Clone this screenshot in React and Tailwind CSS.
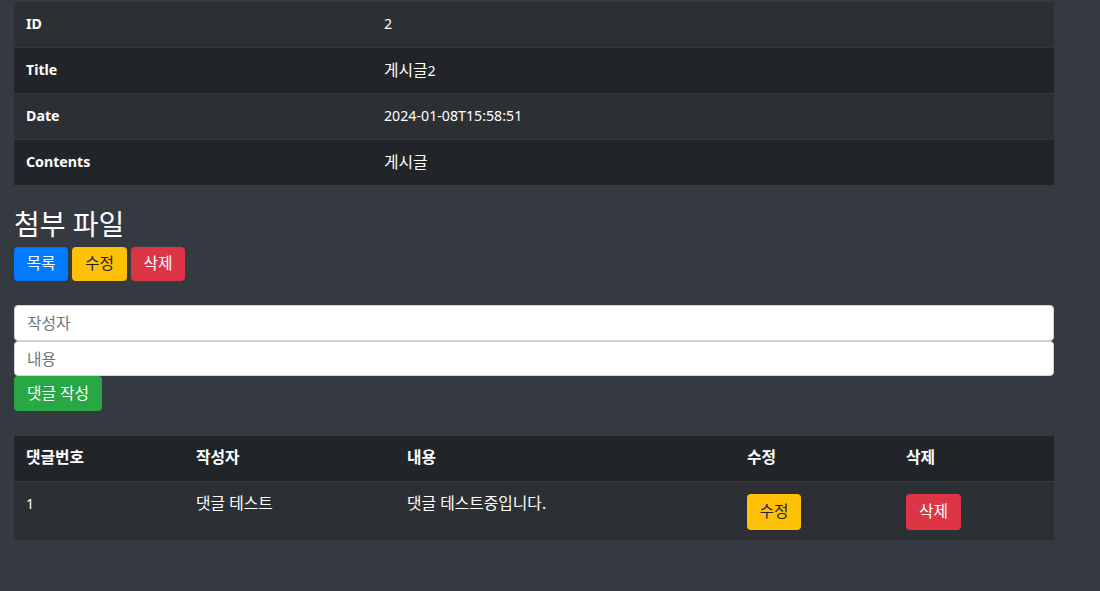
import React from "react";

const font = { fontFamily: '"Noto Sans", "Noto Sans CJK KR", sans-serif' };

function K({ children }) {
  return <span className="text-[15.8px]">{children}</span>;
}

function InfoRow({ label, value, striped, first }) {
  return (
    <tr className={`${striped ? "bg-[#2c3034]" : "bg-[#212529]"} ${first ? "" : "border-t border-[#32383e]"}`}>
      <th className={`w-[358px] ${first ? "h-[45px]" : "h-[46px]"} pl-[12px] text-left font-bold align-middle leading-[24px]`}>{label}</th>
      <td className="pl-[12px] align-middle leading-[24px]">{value}</td>
    </tr>
  );
}

export default function App() {
  return (
    <div className="min-h-screen bg-[#343a40] text-white text-[14.2px]" style={font}>
      <div className="px-[14px] pt-[2px] w-[1068px]">
        <table className="w-[1040px] border-collapse">
          <tbody>
            <InfoRow label="ID" value="2" striped first />
            <InfoRow label="Title" value={<><K>게시글</K>2</>} />
            <InfoRow label="Date" value="2024-01-08T15:58:51" striped />
            <InfoRow label="Contents" value={<K>게시글</K>} />
          </tbody>
        </table>

        <h3 className="mt-[22px] mb-[6px] text-[28px] leading-[34px] font-normal">첨부 파일</h3>
        <div className="flex gap-[4px]">
          <button className="h-[34px] w-[54px] rounded-[4px] bg-[#007bff] text-white text-[15.8px]">목록</button>
          <button className="h-[34px] w-[55px] rounded-[4px] bg-[#ffc107] text-[#212529] text-[15.8px]">수정</button>
          <button className="h-[34px] w-[54px] rounded-[4px] bg-[#dc3545] text-white text-[15.8px]">삭제</button>
        </div>

        <div className="mt-[24px] w-[1040px] flex flex-col">
          <input
            className="h-[36px] w-full rounded-[4px] border border-[#ced4da] bg-white px-[12px] text-[15.8px] text-[#495057] placeholder:text-[#6c757d] outline-none"
            placeholder="작성자"
          />
          <input
            className="h-[35px] w-full rounded-[4px] border border-[#ced4da] bg-white px-[12px] text-[15.8px] text-[#495057] placeholder:text-[#6c757d] outline-none"
            placeholder="내용"
          />
          <div>
            <button className="h-[35px] w-[88px] rounded-[4px] bg-[#28a745] text-white text-[15.8px]">댓글 작성</button>
          </div>
        </div>

        <table className="mt-[25px] w-[1040px] border-collapse">
          <thead>
            <tr className="bg-[#212529] text-[15.8px]">
              <th className="w-[170px] h-[45px] pl-[12px] text-left font-bold align-middle">댓글번호</th>
              <th className="w-[211px] pl-[12px] text-left font-bold align-middle">작성자</th>
              <th className="w-[340px] pl-[12px] text-left font-bold align-middle">내용</th>
              <th className="w-[159px] pl-[12px] text-left font-bold align-middle">수정</th>
              <th className="pl-[12px] text-left font-bold align-middle">삭제</th>
            </tr>
          </thead>
          <tbody>
            <tr className="bg-[#2c3034] border-t border-[#32383e]">
              <td className="h-[59px] pl-[12px] pt-[11px] align-top leading-[22px]">1</td>
              <td className="pl-[12px] pt-[10px] align-top leading-[22px]"><K>댓글 테스트</K></td>
              <td className="pl-[12px] pt-[10px] align-top leading-[22px]"><K>댓글 테스트중입니다.</K></td>
              <td className="pl-[12px] pt-[12px] align-top">
                <button className="h-[36px] w-[54px] rounded-[4px] bg-[#ffc107] text-[#212529] text-[15.8px]">수정</button>
              </td>
              <td className="pl-[12px] pt-[12px] align-top">
                <button className="h-[36px] w-[55px] rounded-[4px] bg-[#dc3545] text-white text-[15.8px]">삭제</button>
              </td>
            </tr>
          </tbody>
        </table>
      </div>
    </div>
  );
}
